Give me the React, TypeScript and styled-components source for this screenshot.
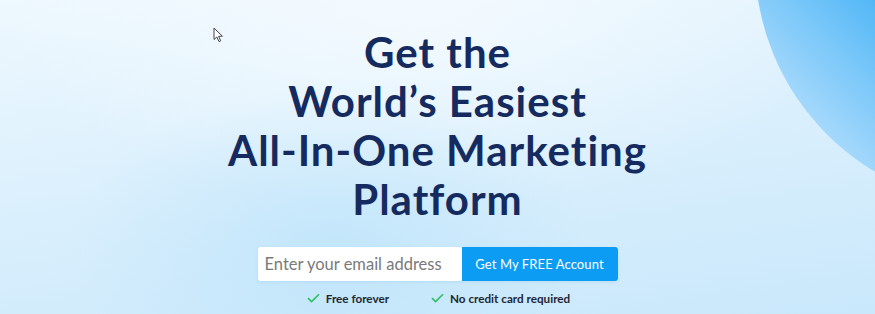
import styled, { createGlobalStyle } from "styled-components";

const Global = createGlobalStyle`
    html, body {
        margin:0;
        padding:0;
    }
    body {
        font-family: Lato, "Open Sans", sans-serif;
    }
`;

const Hero = styled.section`
    position:relative;
    width:875px;
    height:314px;
    overflow:hidden;
    display:flex;
    flex-direction:column;
    align-items:center;
    background:
        radial-gradient(ellipse 260px 160px at 330px 250px, rgba(180,224,250,0.55), rgba(180,224,250,0) 100%),
        radial-gradient(ellipse 420px 200px at 420px 10px, rgba(248,252,255,0.7), rgba(248,252,255,0) 100%),
        linear-gradient(172deg, #eef8fe 0%, #dcf0fd 45%, #c9e8fb 100%);
`;

const Blob = styled.div`
    position:absolute;
    width:490px;
    height:490px;
    left:755px;
    top:-284px;
    border-radius:50%;
    background: linear-gradient(225deg, #2fa8f4 0%, #4fb6f6 66%, #7cc8f9 76%, #acdbfc 87%);
`;

const Cursor = styled.svg`
    position:absolute;
    left:213px;
    top:27px;
`;

const Title = styled.h1`
    position:relative;
    margin:28px 0 0;
    font-family: Lato, "Open Sans", sans-serif;
    font-weight:700;
    font-size:42px;
    line-height:49px;
    letter-spacing:1px;
    color:#152b60;
    text-align:center;
`;

const Form = styled.form`
    position:relative;
    margin-top:23px;
    display:flex;
    width:360px;
    height:34px;
    border-radius:3px;
    overflow:hidden;
    box-shadow: 0 1px 3px rgba(60,140,200,0.12);
`;

const Input = styled.input`
    flex:1;
    min-width:0;
    width:0;
    border:none;
    outline:none;
    padding:0 7px;
    background:#fff;
    font-family: Lato, sans-serif;
    font-size:16.5px;
    color:#333;
    &::placeholder {
        color:#7a7a7a;
    }
`;

const Submit = styled.button`
    flex:none;
    width:156px;
    padding:0;
    border:none;
    background:#0c9cf3;
    color:#fff;
    font-family: Lato, sans-serif;
    font-size:13px;
    letter-spacing:0.1px;
    white-space:nowrap;
    cursor:pointer;
`;

const Perks = styled.ul`
    position:relative;
    display:flex;
    gap:42px;
    list-style:none;
    margin:10px 0 0 2px;
    padding:0;
`;

const Perk = styled.li`
    display:flex;
    align-items:center;
    gap:6px;
    font-family: Lato, sans-serif;
    font-size:11.7px;
    font-weight:700;
    color:#1f2633;
`;

const Check = () => (
    <svg width="13" height="10" viewBox="0 0 13 10">
        <path d="M1 5.2 L4.6 8.6 L12 1.2" fill="none" stroke="#2fbf63" strokeWidth="1.6" />
    </svg>
);

const App = () => {
    return (
        <Hero>
            <Global />
            <Blob />
            <Cursor width="12" height="16" viewBox="0 0 12 16">
                <path d="M1 1 L1 12.5 L3.8 10 L6 14.6 L7.7 13.8 L5.6 9.4 L9.4 9.2 Z" fill="#fff" stroke="#444" strokeWidth="1" />
            </Cursor>
            <Title>
                Get the<br />
                World’s Easiest<br />
                All-In-One Marketing<br />
                Platform
            </Title>
            <Form onSubmit={(e) => e.preventDefault()}>
                <Input type="email" placeholder="Enter your email address" />
                <Submit type="submit">Get My FREE Account</Submit>
            </Form>
            <Perks>
                <Perk><Check />Free forever</Perk>
                <Perk><Check />No credit card required</Perk>
            </Perks>
        </Hero>
    )
};

export default App;
